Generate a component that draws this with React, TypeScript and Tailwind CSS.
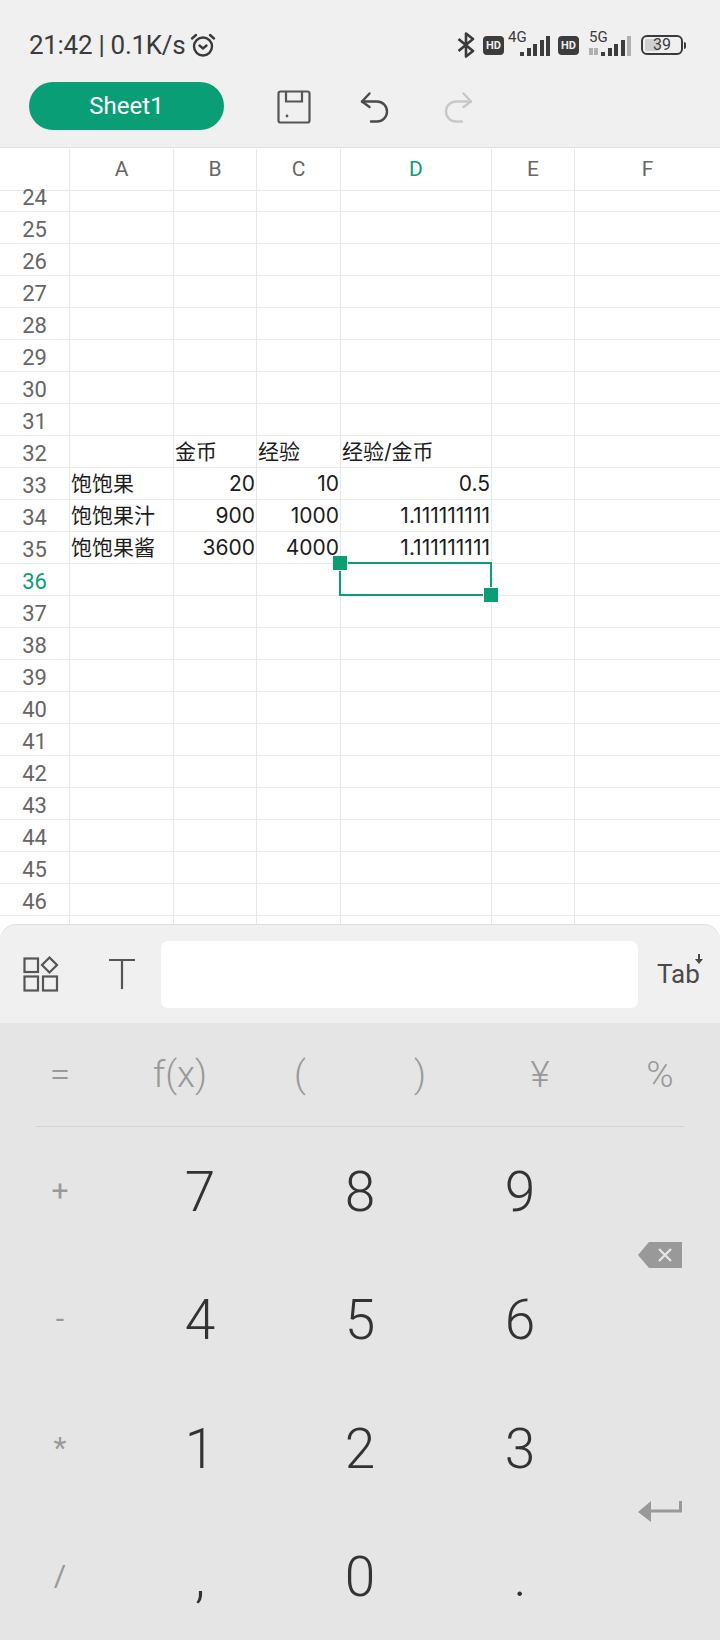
const rowNumbers = Array.from({ length: 24 }, (_, i) => 24 + i);

const colWidths = ["w-[104px]", "w-[83px]", "w-[84px]", "w-[151px]", "w-[83px]", "flex-1"];

type Cell = { text: string; right?: boolean };

const cells: Record<number, Cell[]> = {
  32: [{ text: "" }, { text: "金币" }, { text: "经验" }, { text: "经验/金币" }],
  33: [{ text: "饱饱果" }, { text: "20", right: true }, { text: "10", right: true }, { text: "0.5", right: true }],
  34: [{ text: "饱饱果汁" }, { text: "900", right: true }, { text: "1000", right: true }, { text: "1.111111111", right: true }],
  35: [{ text: "饱饱果酱" }, { text: "3600", right: true }, { text: "4000", right: true }, { text: "1.111111111", right: true }],
};

const FONT = "font-['Roboto','Noto_Sans_CJK_SC',sans-serif]";

function Signal({ dim }: { dim?: boolean }) {
  const heights = [4, 8, 12, 16, 20];
  return (
    <div className="flex items-end gap-[2.5px]">
      {heights.map((h, i) => (
        <div
          key={h}
          className={dim && i === 4 ? "w-[4px] bg-[#b0b0b0]" : "w-[4px] bg-[#3c3c3c]"}
          style={{ height: h }}
        />
      ))}
    </div>
  );
}

function HdBadge() {
  return (
    <div className="flex h-[19px] w-[21px] items-center justify-center rounded-[4px] bg-[#3c3c3c] text-[11px] leading-none font-bold text-[#efefef]">
      HD
    </div>
  );
}

function StatusBar() {
  return (
    <div className="flex h-[82px] items-center justify-between pt-2 pr-[34px] pl-[29px]">
      <div className="flex items-center gap-[5px]">
        <span className="text-[26px] leading-none tracking-[-0.3px] text-[#3a3a3a]">21:42 | 0.1K/s</span>
        <svg width="26" height="26" viewBox="0 0 26 26" fill="none" stroke="#3a3a3a" strokeWidth="2.4" strokeLinecap="round">
          <circle cx="13" cy="14.5" r="9" />
          <path d="M9.5 13.5l3.5 3 3.5-3" />
          <path d="M2 6.5l4-3.5M24 6.5l-4-3.5" />
        </svg>
      </div>
      <div className="flex items-center">
        <svg width="18" height="26" viewBox="0 0 18 26" fill="none" stroke="#3a3a3a" strokeWidth="2.6" strokeLinejoin="round">
          <path d="M1.5 7L16 19l-7 5.5v-23L16 7 1.5 19" />
        </svg>
        <div className="ml-[8px]"><HdBadge /></div>
        <div className="relative ml-[4px] h-[26px] w-[42px]">
          <span className="absolute top-[-3px] left-0 text-[15px] leading-[16px] text-[#3a3a3a]">4G</span>
          <div className="absolute right-0 bottom-[2px]"><Signal /></div>
        </div>
        <div className="ml-[8px]"><HdBadge /></div>
        <div className="relative ml-[10px] h-[26px] w-[42px]">
          <span className="absolute top-[-3px] left-0 text-[15px] leading-[16px] text-[#3a3a3a]">5G</span>
          <div className="absolute bottom-[3px] left-0 flex gap-[1px]">
            <div className="h-[7px] w-[4px] bg-[#b0b0b0]" />
            <div className="h-[7px] w-[4px] bg-[#b0b0b0]" />
          </div>
          <div className="absolute right-0 bottom-[2px]"><Signal dim /></div>
        </div>
        <div className="ml-[10px] flex items-center">
          <div className="relative flex h-[20px] w-[42px] items-center justify-center overflow-hidden rounded-[6px] border-2 border-[#3a3a3a]">
            <div className="absolute inset-y-[2px] left-[2px] w-[14px] rounded-[2px] bg-[#cfcfcf]" />
            <span className="relative text-[16px] leading-none text-[#3a3a3a]">39</span>
          </div>
          <div className="ml-[1px] h-[7px] w-[2px] rounded-r-sm bg-[#3a3a3a]" />
        </div>
      </div>
    </div>
  );
}

function Toolbar() {
  return (
    <div className="flex h-[65px] items-start pl-[29px]">
      <div className="flex h-[48px] w-[195px] items-center justify-center rounded-full bg-[#0a9e76] text-[24px] leading-none text-white">
        Sheet1
      </div>
      <svg className="mt-[8px] ml-[53px]" width="34" height="34" viewBox="0 0 34 34" fill="none" stroke="#555" strokeWidth="2.2">
        <rect x="1.5" y="1.5" width="31" height="31" rx="2" />
        <path d="M9 2v9.5h16V2" />
        <circle cx="10" cy="26" r="1.4" fill="#555" stroke="none" />
      </svg>
      <svg className="mt-[9px] ml-[49px]" width="30" height="32" viewBox="0 0 30 32" fill="none" stroke="#4a4a4a" strokeWidth="2.4" strokeLinecap="round" strokeLinejoin="round">
        <path d="M2 10.5h15a10 10 0 0 1 0 20h-6" />
        <path d="M9.5 2.5L2 10.5l7.5 5.5" />
      </svg>
      <svg className="mt-[9px] ml-[53px]" width="30" height="32" viewBox="0 0 30 32" fill="none" stroke="#c8c8c8" strokeWidth="2.4" strokeLinecap="round" strokeLinejoin="round">
        <path d="M28 10.5H13a10 10 0 0 0 0 20h6" />
        <path d="M20.5 2.5L28 10.5l-7.5 5.5" />
      </svg>
    </div>
  );
}

function SheetGrid() {
  return (
    <div className="min-h-0 flex-1 overflow-hidden border-t border-[#e0e0e0] bg-white">
      <div className="flex h-[43px] border-b border-[#e8e8e8] pt-[1px] text-[21px] text-[#666]">
        <div className="w-[70px] border-r border-[#e8e8e8]" />
        {["A", "B", "C", "D", "E", "F"].map((col, i) => (
          <div
            key={col}
            className={`flex items-center justify-center ${colWidths[i]} ${i < 5 ? "border-r border-[#e8e8e8]" : ""} ${col === "D" ? "text-[#0a9e76]" : ""}`}
          >
            {col}
          </div>
        ))}
      </div>
      <div className="-mt-[11px]">
        {rowNumbers.map((n) => (
          <div key={n} className="flex h-[32px] border-b border-[#e8e8e8]">
            <div
              className={`flex w-[70px] items-center justify-center border-r border-[#e8e8e8] pt-[3px] text-[22px] ${n === 36 ? "text-[#0a9e76]" : "text-[#666]"}`}
            >
              {n}
            </div>
            {colWidths.map((w, i) => {
              const cell = cells[n]?.[i];
              return (
                <div
                  key={w + i}
                  className={`relative flex items-center pt-[1px] pr-[1px] pl-[1px] font-['Inter','Noto_Sans_CJK_SC',sans-serif] text-[21px] whitespace-nowrap text-[#1c1c1c] ${w} ${i < 5 ? "border-r border-[#e8e8e8]" : ""} ${cell?.right ? "justify-end" : ""}`}
                >
                  {cell?.text}
                  {n === 36 && i === 3 && (
                    <div className="absolute -top-[2px] -left-[2px] z-10 h-[34px] w-[153px] border-2 border-[#0a9e76]">
                      <div className="absolute -top-[9px] -left-[9px] h-[16px] w-[16px] border border-white bg-[#0a9e76]" />
                      <div className="absolute -right-[9px] -bottom-[9px] h-[16px] w-[16px] border border-white bg-[#0a9e76]" />
                    </div>
                  )}
                </div>
              );
            })}
          </div>
        ))}
      </div>
    </div>
  );
}

function InputBar() {
  return (
    <div className="relative z-20 -mt-[16px] flex h-[99px] shrink-0 items-center rounded-t-[16px] border-t border-[#dcdcdc] bg-[#f0f0f0]">
      <svg className="ml-[23px]" width="36" height="36" viewBox="0 0 36 36" fill="none" stroke="#555" strokeWidth="2.2">
        <rect x="1.5" y="2.5" width="13.5" height="13.5" />
        <rect x="1.5" y="20.5" width="13.5" height="14" />
        <rect x="20" y="20.5" width="14" height="14" />
        <path d="M26.5 1.5l7.5 7.5-7.5 7.5-7.5-7.5z" />
      </svg>
      <svg className="ml-[49px]" width="28" height="32" viewBox="0 0 28 32" fill="none" stroke="#555" strokeWidth="2.2">
        <path d="M1 2h26M14 2v29" />
      </svg>
      <div className="ml-[25px] h-[67px] w-[477px] rounded-[7px] bg-white" />
      <div className="relative ml-[19px] text-[26px] leading-none text-[#4a4a4a]">
        Tab
        <svg className="absolute -top-[7px] -right-[3px]" width="8" height="10" viewBox="0 0 8 10" fill="#4a4a4a">
          <path d="M3 0h2v5h3L4 10 0 5h3z" />
        </svg>
      </div>
    </div>
  );
}

function SideKey({ children }: { children: string }) {
  return (
    <div className="flex items-center justify-center text-[30px] leading-none text-[#999]">{children}</div>
  );
}

function NumKey({ children }: { children: string }) {
  return (
    <div className="flex items-center justify-center pt-[3px] text-[55px] leading-none font-[350] text-[#333]">{children}</div>
  );
}

function Keypad() {
  return (
    <div className="flex h-[617px] shrink-0 flex-col bg-[#e5e5e5]">
      <div className="grid h-[103px] grid-cols-6">
        {["=", "f(x)", "(", ")", "¥", "%"].map((s) => (
          <div key={s} className="flex items-center justify-center text-[37px] leading-none font-[350] text-[#999]">
            {s}
          </div>
        ))}
      </div>
      <div className="mx-[36px] h-px bg-[#d2d2d2]" />
      <div className="grid flex-1 grid-cols-[120px_1fr_1fr_1fr_120px] grid-rows-4">
        <SideKey>+</SideKey>
        <NumKey>7</NumKey>
        <NumKey>8</NumKey>
        <NumKey>9</NumKey>
        <div className="row-span-2 flex items-center justify-center">
          <svg width="44" height="26" viewBox="0 0 44 26">
            <path d="M11 0h33v26H11L0 13z" fill="#999" />
            <path d="M21 7l12 12M33 7L21 19" stroke="#e5e5e5" strokeWidth="2.4" />
          </svg>
        </div>
        <SideKey>-</SideKey>
        <NumKey>4</NumKey>
        <NumKey>5</NumKey>
        <NumKey>6</NumKey>
        <SideKey>*</SideKey>
        <NumKey>1</NumKey>
        <NumKey>2</NumKey>
        <NumKey>3</NumKey>
        <div className="row-span-2 flex items-center justify-center">
          <svg width="44" height="22" viewBox="0 0 44 22">
            <path d="M13 0v8.5h28V0h3v11.5H13V21L0 11z" fill="#999" />
          </svg>
        </div>
        <SideKey>/</SideKey>
        <NumKey>,</NumKey>
        <NumKey>0</NumKey>
        <NumKey>.</NumKey>
      </div>
    </div>
  );
}

export default function App() {
  return (
    <div className={`flex h-[1640px] w-[720px] flex-col overflow-hidden bg-[#f0f0f0] ${FONT}`}>
      <StatusBar />
      <Toolbar />
      <SheetGrid />
      <InputBar />
      <Keypad />
    </div>
  );
}
